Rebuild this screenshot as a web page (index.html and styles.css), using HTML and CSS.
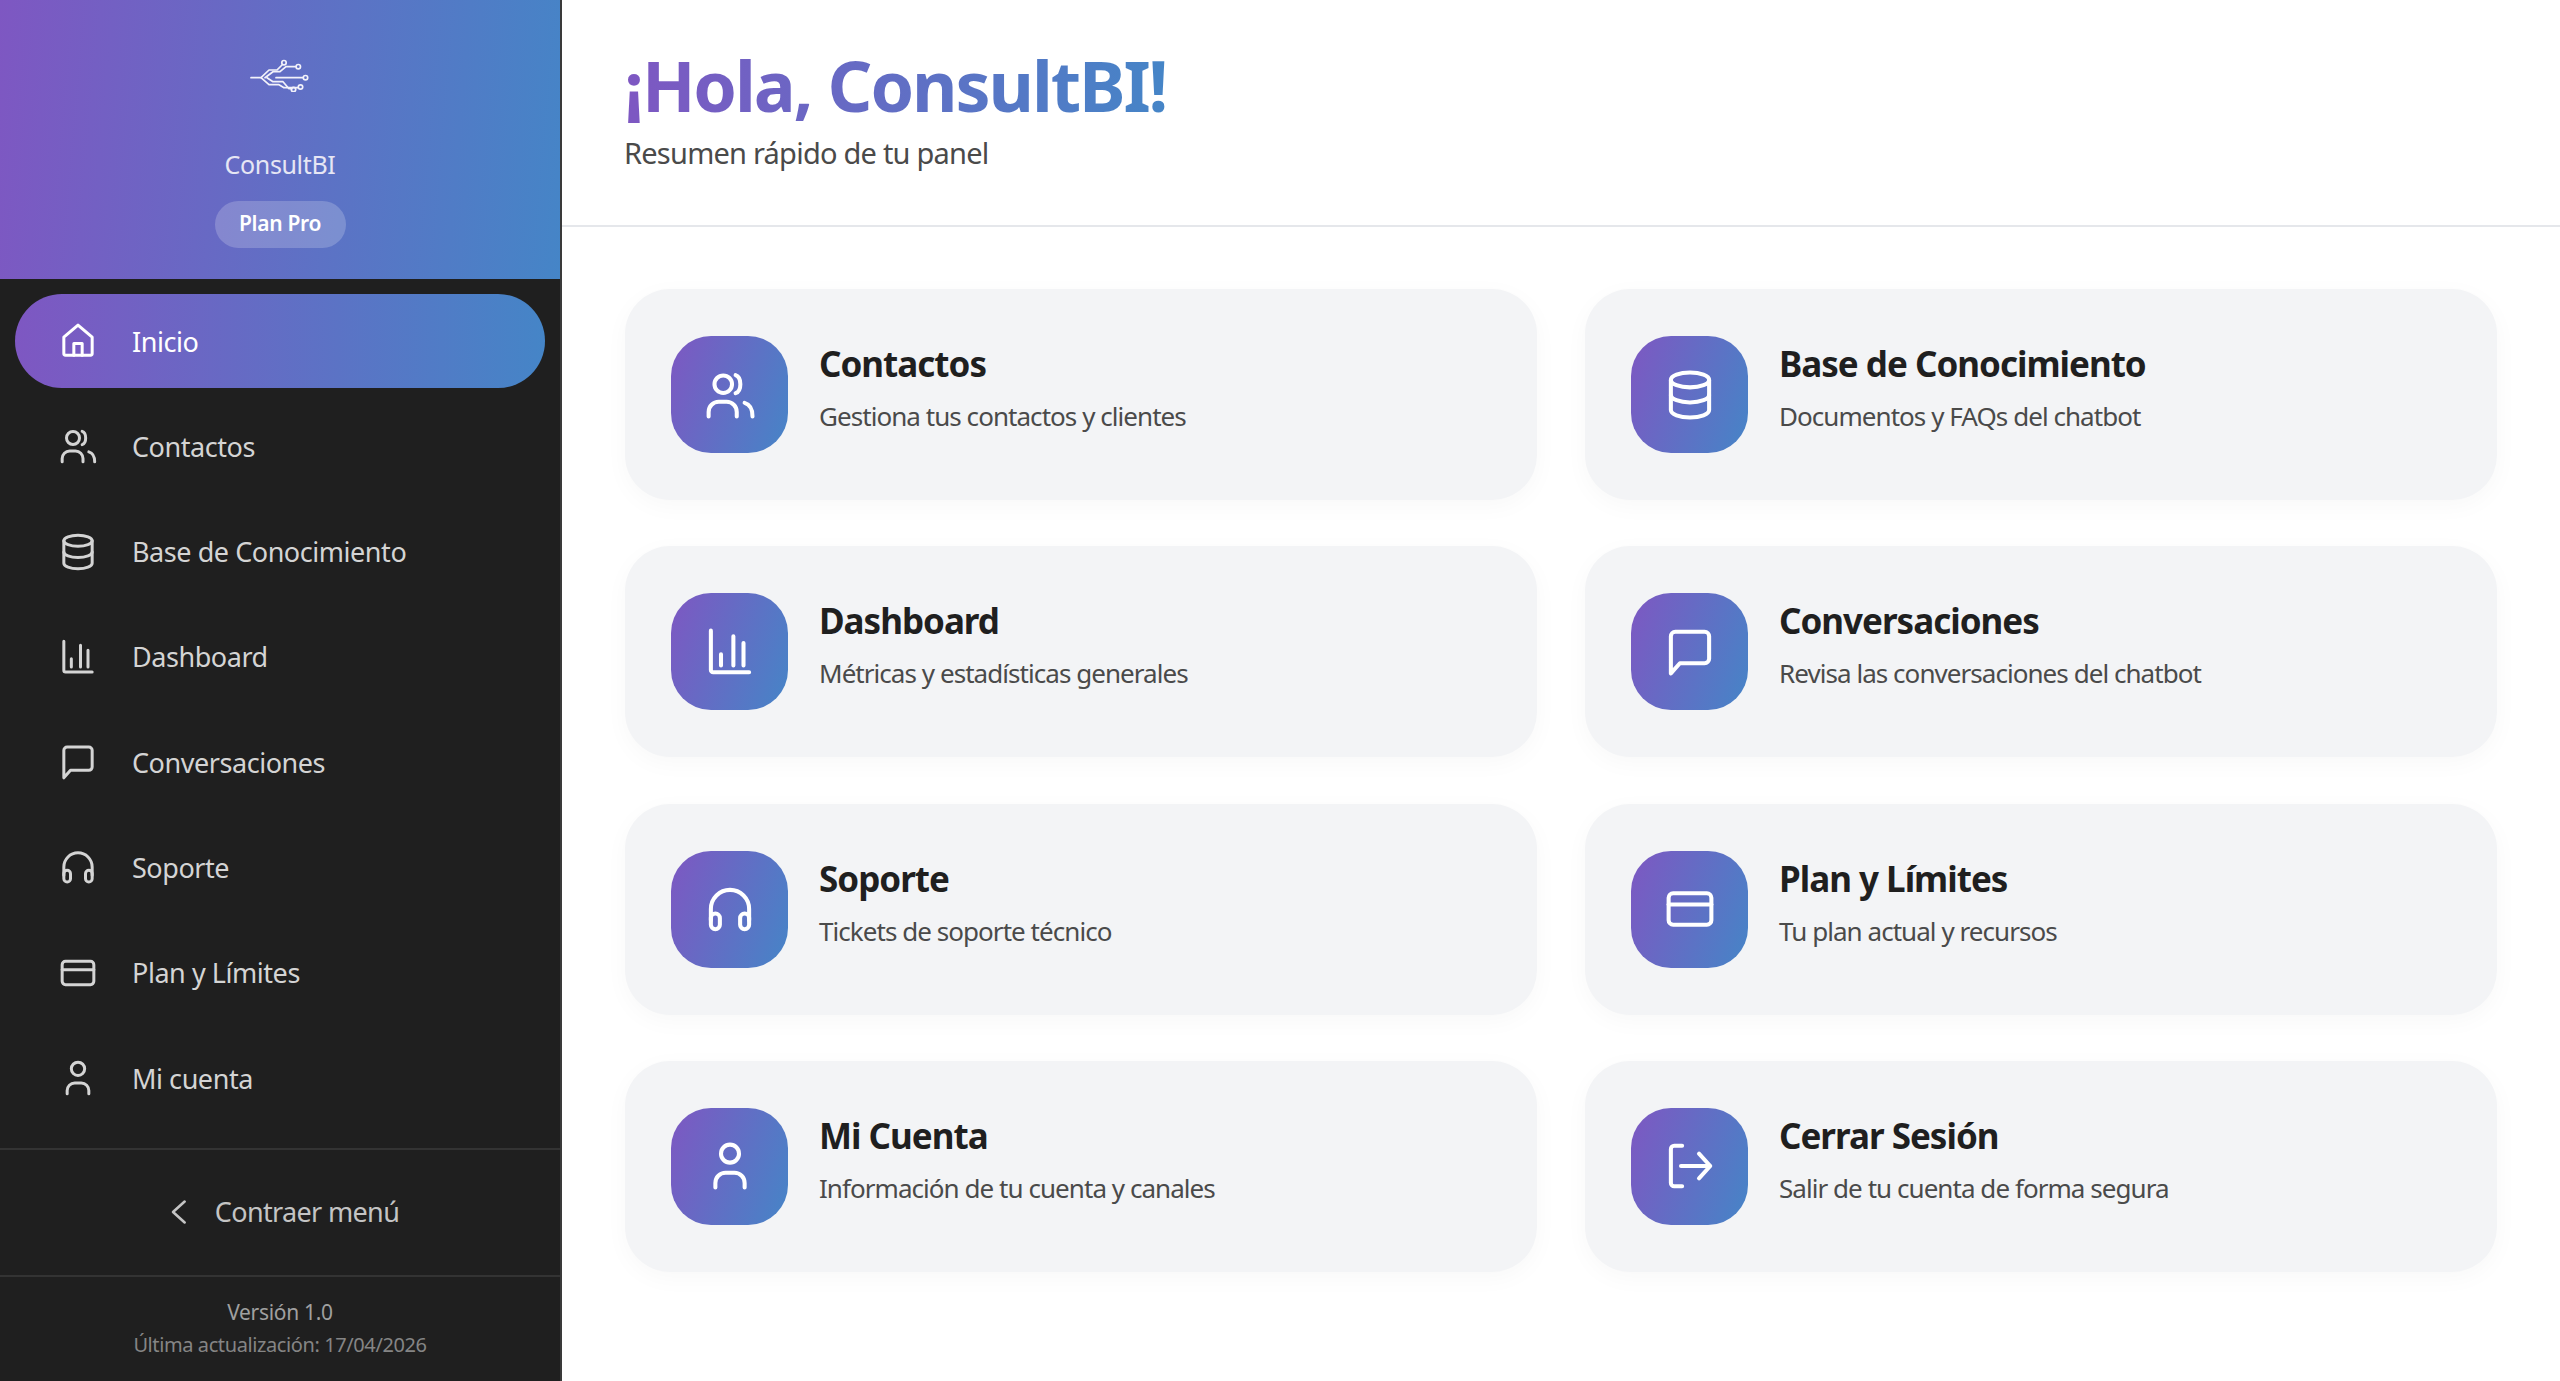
FILE: index.html
```html
<!DOCTYPE html>
<html lang="es">

<head>
    <meta charset="UTF-8">
    <meta name="viewport" content="width=device-width, initial-scale=1.0">
    <title>ConsultBI - Inicio</title>
    <link rel="stylesheet" href="styles.css">
</head>

<body>
    <svg class="sprite" aria-hidden="true">
        <symbol id="i-home" viewBox="0 0 24 24"><path d="M3.500 19.500V9.700L12 2.500l8.500 7.200v9.800a1 1 0 0 1-1 1h-15a1 1 0 0 1-1-1z"/><path d="M9.500 20.500v-7h5v7"/></symbol>
        <symbol id="i-users" viewBox="0 0 24 24"><circle cx="9" cy="7.200" r="3.900"/><path d="M14.500 3.200c2.800 1 2.800 7 0 8"/><path d="M2.500 21.500v-2a4.500 4.500 0 0 1 4.500-4.500h3.500a4.500 4.500 0 0 1 4.500 4.500v2"/><path d="M18.500 15.500c2 .6 3.500 2 3.500 6"/></symbol>
        <symbol id="i-db" viewBox="0 0 24 24"><ellipse cx="12" cy="5.300" rx="8.500" ry="3.300"/><path d="M3.500 5.300v13.400c0 1.800 3.800 3.300 8.500 3.300s8.500-1.500 8.500-3.300V5.300"/><path d="M3.500 12c0 1.800 3.800 3.300 8.500 3.300s8.500-1.500 8.500-3.300"/></symbol>
        <symbol id="i-chart" viewBox="0 0 24 24"><path d="M3.500 2.500V20a1 1 0 0 0 1 1h16"/><path d="M8 18v-5M13.500 18V5M18 18V8"/></symbol>
        <symbol id="i-chat" viewBox="0 0 24 24"><path d="M3.500 21.500V5a2 2 0 0 1 2-2h13a2 2 0 0 1 2 2v10a2 2 0 0 1-2 2H7.500z"/></symbol>
        <symbol id="i-phones" viewBox="0 0 24 24"><path d="M3.500 17v-5a8.500 8.500 0 0 1 17 0v5"/><rect x="3.500" y="14" width="4" height="7" rx="2"/><rect x="16.500" y="14" width="4" height="7" rx="2"/></symbol>
        <symbol id="i-card" viewBox="0 0 24 24"><rect x="2.500" y="5" width="19" height="14" rx="2"/><path d="M2.500 10h19"/></symbol>
        <symbol id="i-user" viewBox="0 0 24 24"><circle cx="12" cy="6.500" r="4"/><path d="M5.500 21.500v-2a4.500 4.500 0 0 1 4.500-4.500h4a4.500 4.500 0 0 1 4.500 4.500v2"/></symbol>
        <symbol id="i-out" viewBox="0 0 24 24"><path d="M8.500 3H5a1.500 1.500 0 0 0-1.500 1.500v15A1.500 1.500 0 0 0 5 21h3.500"/><path d="M8 12h13M16 6.500l5 5.500-5 5.500"/></symbol>
    </svg>

    <div class="app">
        <aside class="sidebar">
            <div class="brand">
                <svg class="brand-logo" viewBox="29 16 60 34">
                    <path d="M30 35.700h10l8-7.700h8l5-5"/>
                    <path d="M44 35.700l8-6h7l6-5h10"/>
                    <path d="M55 35.700h27"/>
                    <path d="M40 35.700l8 7h10l5 3h14"/>
                    <path d="M46 35.700l6 4h10l6 7h3"/>
                    <circle cx="63" cy="20.700" r="2.200"/>
                    <circle cx="77.300" cy="24.700" r="2.200"/>
                    <circle cx="84.500" cy="35.700" r="2.200"/>
                    <circle cx="79.500" cy="45" r="2.200"/>
                    <circle cx="72.500" cy="47.500" r="2.200"/>
                </svg>
                <div class="brand-name">ConsultBI</div>
                <div class="plan-badge">Plan Pro</div>
            </div>

            <nav class="nav">
                <a class="nav-item active"><svg class="nav-icon"><use href="#i-home"/></svg>Inicio</a>
                <a class="nav-item"><svg class="nav-icon"><use href="#i-users"/></svg>Contactos</a>
                <a class="nav-item"><svg class="nav-icon"><use href="#i-db"/></svg>Base de Conocimiento</a>
                <a class="nav-item"><svg class="nav-icon"><use href="#i-chart"/></svg>Dashboard</a>
                <a class="nav-item"><svg class="nav-icon"><use href="#i-chat"/></svg>Conversaciones</a>
                <a class="nav-item"><svg class="nav-icon"><use href="#i-phones"/></svg>Soporte</a>
                <a class="nav-item"><svg class="nav-icon"><use href="#i-card"/></svg>Plan y Límites</a>
                <a class="nav-item"><svg class="nav-icon"><use href="#i-user"/></svg>Mi cuenta</a>
            </nav>

            <button class="collapse">
                <svg class="collapse-icon" viewBox="0 0 24 24"><path d="M16 3l-10 9 10 9"/></svg>
                Contraer menú
            </button>

            <div class="version">
                <div class="version-num">Versión 1.0</div>
                <div class="version-date">Última actualización: 17/04/2026</div>
            </div>
        </aside>

        <main class="main">
            <header class="top">
                <h1 class="greeting">¡Hola, ConsultBI!</h1>
                <p class="subtitle">Resumen rápido de tu panel</p>
            </header>

            <section class="cards">
                <a class="card">
                    <span class="card-icon"><svg><use href="#i-users"/></svg></span>
                    <span class="card-text"><span class="card-title">Contactos</span><span class="card-desc">Gestiona tus contactos y clientes</span></span>
                </a>
                <a class="card">
                    <span class="card-icon"><svg><use href="#i-db"/></svg></span>
                    <span class="card-text"><span class="card-title">Base de Conocimiento</span><span class="card-desc">Documentos y FAQs del chatbot</span></span>
                </a>
                <a class="card">
                    <span class="card-icon"><svg><use href="#i-chart"/></svg></span>
                    <span class="card-text"><span class="card-title">Dashboard</span><span class="card-desc">Métricas y estadísticas generales</span></span>
                </a>
                <a class="card">
                    <span class="card-icon"><svg><use href="#i-chat"/></svg></span>
                    <span class="card-text"><span class="card-title">Conversaciones</span><span class="card-desc">Revisa las conversaciones del chatbot</span></span>
                </a>
                <a class="card">
                    <span class="card-icon"><svg><use href="#i-phones"/></svg></span>
                    <span class="card-text"><span class="card-title">Soporte</span><span class="card-desc">Tickets de soporte técnico</span></span>
                </a>
                <a class="card">
                    <span class="card-icon"><svg><use href="#i-card"/></svg></span>
                    <span class="card-text"><span class="card-title">Plan y Límites</span><span class="card-desc">Tu plan actual y recursos</span></span>
                </a>
                <a class="card">
                    <span class="card-icon"><svg><use href="#i-user"/></svg></span>
                    <span class="card-text"><span class="card-title">Mi Cuenta</span><span class="card-desc">Información de tu cuenta y canales</span></span>
                </a>
                <a class="card">
                    <span class="card-icon"><svg><use href="#i-out"/></svg></span>
                    <span class="card-text"><span class="card-title">Cerrar Sesión</span><span class="card-desc">Salir de tu cuenta de forma segura</span></span>
                </a>
            </section>
        </main>
    </div>
</body>

</html>
```

FILE: styles.css
```css
* {
    box-sizing: border-box;
}

body {
    margin: 0;
    background: #fff;
    font-family: "Noto Sans", sans-serif;
}

.sprite {
    display: none;
}

symbol,
.nav-icon,
.card-icon svg,
.collapse-icon {
    fill: none;
    stroke: currentColor;
    stroke-width: 1.8;
    stroke-linecap: round;
    stroke-linejoin: round;
}

.app {
    display: flex;
    height: 100vh;
    overflow: hidden;
}

/* sidebar */
.sidebar {
    width: 562px;
    flex-shrink: 0;
    display: flex;
    flex-direction: column;
    background: #1f1f1f;
    border-right: 2px solid #3a3a3a;
}

.brand {
    height: 279px;
    padding-top: 58px;
    display: flex;
    flex-direction: column;
    align-items: center;
    color: #fff;
    background: linear-gradient(95deg, #7e57c2, #4585c7);
}

.brand-logo {
    width: 60px;
    height: 34px;
    fill: none;
    stroke: #f2f2fa;
    stroke-width: 1.7;
    stroke-linecap: round;
    stroke-linejoin: round;
}

.brand-name {
    margin-top: 54px;
    font-size: 25px;
    letter-spacing: -0.35px;
    line-height: 36px;
    color: #e6e6f4;
}

.plan-badge {
    margin-top: 19px;
    width: 131px;
    height: 47px;
    border-radius: 24px;
    background: rgba(255, 255, 255, 0.2);
    font-size: 21px;
    letter-spacing: -0.3px;
    font-weight: 600;
    line-height: 45px;
    text-align: center;
}

.nav {
    flex: 1;
    display: flex;
    flex-direction: column;
    gap: 11.3px;
    padding: 15px 15px 0;
}

.nav-item {
    height: 94px;
    flex-shrink: 0;
    display: flex;
    align-items: center;
    gap: 34px;
    padding-left: 43px;
    border-radius: 47px;
    font-size: 27px;
    letter-spacing: -0.45px;
    color: #d4d4d4;
}

.nav-item.active {
    color: #fff;
    background: linear-gradient(90deg, #7e57c2, #4585c7);
}

.nav-icon {
    width: 40px;
    height: 40px;
    flex-shrink: 0;
}

.collapse {
    height: 129px;
    display: flex;
    align-items: center;
    justify-content: center;
    gap: 21px;
    padding: 0 0 2px 5px;
    border: 0;
    border-top: 2px solid #333;
    border-bottom: 2px solid #333;
    background: none;
    color: #c4c4c4;
    font-family: inherit;
    font-size: 27px;
    letter-spacing: -0.65px;
}

.collapse-icon {
    width: 28px;
    height: 28px;
    stroke-width: 2.2;
}

.version {
    height: 104px;
    padding-top: 19px;
    text-align: center;
    color: #a0a0a0;
}

.version-num {
    font-size: 21px;
    letter-spacing: -0.3px;
    line-height: 32px;
}

.version-date {
    font-size: 20px;
    letter-spacing: -0.4px;
    line-height: 33px;
    color: #858585;
}

/* main */
.main {
    flex: 1;
    min-width: 0;
}

.top {
    height: 227px;
    padding: 47px 62px 0;
    border-bottom: 2px solid #e5e7eb;
}

.greeting {
    margin: 0;
    display: block;
    width: fit-content;
    font-size: 70px;
    letter-spacing: -2.1px;
    font-weight: 700;
    line-height: 76px;
    background: linear-gradient(90deg, #7e57c2, #4585c7);
    -webkit-background-clip: text;
    background-clip: text;
    color: transparent;
}

.subtitle {
    margin: 10px 0 0;
    font-size: 29px;
    letter-spacing: -0.77px;
    line-height: 40px;
    color: #4a4a4a;
}

.cards {
    display: grid;
    grid-template-columns: 1fr 1fr;
    gap: 46.3px 48px;
    padding: 62px 63px 0;
}

.card {
    height: 211px;
    display: flex;
    align-items: center;
    gap: 31px;
    padding-left: 46px;
    background: #f3f4f6;
    border-radius: 45px;
    box-shadow: 0 6px 24px rgba(0, 0, 0, 0.03);
}

.card-icon {
    width: 117px;
    height: 117px;
    flex-shrink: 0;
    display: flex;
    align-items: center;
    justify-content: center;
    border-radius: 40px;
    color: #fff;
    background: linear-gradient(110deg, #7e57c2, #4585c7);
}

.card-icon svg {
    width: 54px;
    height: 54px;
}

.card-text {
    display: flex;
    flex-direction: column;
    gap: 12px;
    margin-top: -13px;
}

.card-title {
    font-size: 35px;
    letter-spacing: -1px;
    font-weight: 700;
    line-height: 44px;
    color: #1f1f1f;
}

.card-desc {
    font-size: 26px;
    letter-spacing: -0.95px;
    line-height: 36px;
    color: #4a4a4a;
}
```
